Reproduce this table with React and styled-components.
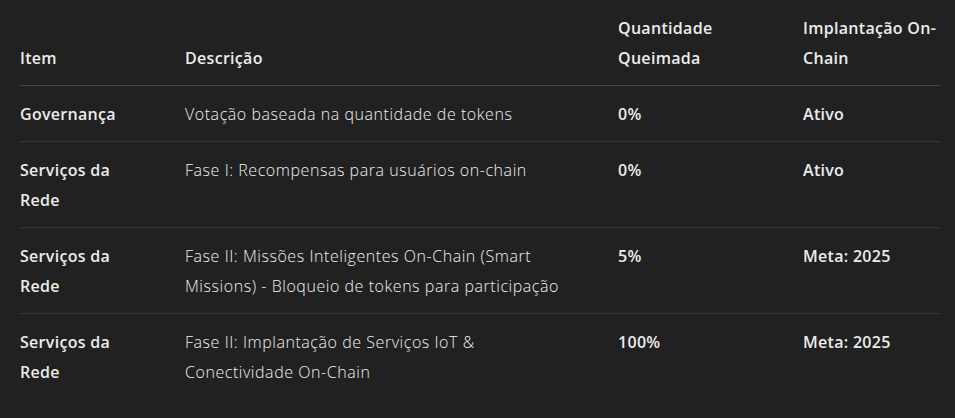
import React from "react";
import styled, { createGlobalStyle } from "styled-components";

const Global = createGlobalStyle`
  html, body { margin: 0; padding: 0; background: #212121; }
  body { font-family: "Open Sans", "Noto Sans", sans-serif; color: #ececec; }
`;

const Wrap = styled.div`
  padding: 0 15px 0 20px;
`;

const Table = styled.table`
  width: 920px;
  border-collapse: collapse;
  table-layout: fixed;
  font-size: 16px;
  line-height: 30px;
`;

const Col = styled.col`
  width: ${(p) => p.$w}px;
`;

const Th = styled.th`
  text-align: left;
  vertical-align: bottom;
  font-weight: 600;
  letter-spacing: 0.3px;
  color: #ececec;
  padding: 13px ${(p) => p.$pr}px 12px 0;
  border-bottom: 1px solid #484848;
`;

const Row = styled.tr`
  border-bottom: ${(p) => (p.$last ? "none" : "1px solid #353535")};
`;

const Td = styled.td`
  vertical-align: top;
  padding: 13px ${(p) => p.$pr}px 12px 0;
  font-weight: ${(p) => (p.$bold ? 600 : 300)};
  letter-spacing: ${(p) => (p.$bold ? 0.3 : 0.55)}px;
  color: ${(p) => (p.$bold ? "#ececec" : "#f0f0f0")};
`;

const WIDTHS = [165, 433, 185, 137];
const PAD = [42, 40, 20, 0];

const rows = [
  ["Governança", "Votação baseada na quantidade de tokens", "0%", "Ativo"],
  ["Serviços da Rede", "Fase I: Recompensas para usuários on-chain", "0%", "Ativo"],
  [
    "Serviços da Rede",
    "Fase II: Missões Inteligentes On-Chain (Smart Missions) - Bloqueio de tokens para participação",
    "5%",
    "Meta: 2025",
  ],
  [
    "Serviços da Rede",
    "Fase II: Implantação de Serviços IoT & Conectividade On-Chain",
    "100%",
    "Meta: 2025",
  ],
];

const heads = ["Item", "Descrição", "Quantidade Queimada", "Implantação On-Chain"];

export default function App() {
  return (
    <>
      <Global />
      <Wrap>
        <Table>
          <colgroup>
            {WIDTHS.map((w, j) => (
              <Col key={j} $w={w} />
            ))}
          </colgroup>
          <thead>
            <tr>
              {heads.map((h, j) => (
                <Th key={j} $pr={PAD[j]}>{h}</Th>
              ))}
            </tr>
          </thead>
          <tbody>
            {rows.map((r, i) => (
              <Row key={i} $last={i === rows.length - 1}>
                {r.map((c, j) => (
                  <Td key={j} $pr={PAD[j]} $bold={j !== 1}>{c}</Td>
                ))}
              </Row>
            ))}
          </tbody>
        </Table>
      </Wrap>
    </>
  );
}
